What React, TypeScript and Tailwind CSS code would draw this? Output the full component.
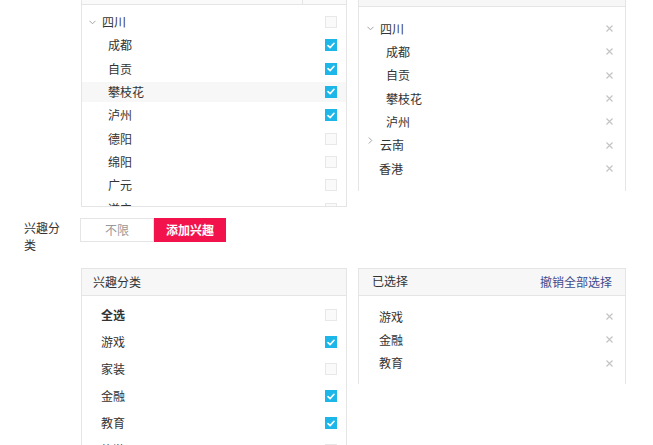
import React from 'react'

const font = { fontFamily: '"Noto Sans CJK SC", "Noto Sans", sans-serif' }

function Check({ on }: { on: boolean }) {
  if (on) {
    return (
      <span className="flex h-[12px] w-[12px] items-center justify-center bg-[#1db6e9]">
        <svg width="8" height="7" viewBox="0 0 8 7" fill="none">
          <path d="M1 3.6 L3.1 5.6 L7 1.3" stroke="#fff" strokeWidth="1.6" strokeLinecap="round" strokeLinejoin="round" />
        </svg>
      </span>
    )
  }
  return <span className="block h-[12px] w-[12px] border border-[#e8e8e8] bg-[#fafafa]" />
}

function Close() {
  return (
    <svg width="7" height="7" viewBox="0 0 7 7">
      <path d="M0.5 0.5 L6.5 6.5 M6.5 0.5 L0.5 6.5" stroke="#c4c4c4" strokeWidth="1.2" />
    </svg>
  )
}

function ChevronDown() {
  return (
    <svg width="7" height="5" viewBox="0 0 7 5" fill="none">
      <path d="M0.5 0.8 L3.5 3.8 L6.5 0.8" stroke="#999" strokeWidth="0.9" />
    </svg>
  )
}

function ChevronRight() {
  return (
    <svg width="5" height="7" viewBox="0 0 5 7" fill="none">
      <path d="M0.8 0.5 L3.8 3.5 L0.8 6.5" stroke="#999" strokeWidth="0.9" />
    </svg>
  )
}

const cities = [
  { name: '成都', on: true },
  { name: '自贡', on: true },
  { name: '攀枝花', on: true, hover: true },
  { name: '泸州', on: true },
  { name: '德阳', on: false },
  { name: '绵阳', on: false },
  { name: '广元', on: false },
  { name: '遂宁', on: false },
]

const interests = [
  { name: '游戏', on: true },
  { name: '家装', on: false },
  { name: '金融', on: true },
  { name: '教育', on: true },
  { name: '旅游', on: false },
]

export default function App() {
  return (
    <div className="h-[445px] w-[653px] overflow-hidden bg-white text-[12px] text-[#333]" style={font}>
      <div className="-mt-[23px]">
        {/* region selector */}
        <div className="flex items-start gap-[11px] pl-[81px]">
          <div className="w-[266px] border border-[#e5e5e5]">
            <div className="flex h-[27px] border-b border-[#e5e5e5] bg-[#fafafa]">
              <div className="flex-1" />
              <div className="w-[44px] border-l border-[#e5e5e5]" />
            </div>
            <div className="flex h-[201px] flex-col gap-[3.33px] overflow-hidden pt-[7px]">
              <div className="flex h-[20px] shrink-0 items-center pr-[9px] pl-[7px]">
                <span className="mr-[6px] flex w-[7px] justify-center"><ChevronDown /></span>
                <span className="flex-1">四川</span>
                <Check on={false} />
              </div>
              {cities.map((c) => (
                <div
                  key={c.name}
                  className={`flex h-[20px] shrink-0 items-center pr-[9px] pl-[26px] ${c.hover ? 'bg-[#f7f7f7]' : ''}`}
                >
                  <span className="flex-1">{c.name}</span>
                  <Check on={c.on} />
                </div>
              ))}
            </div>
          </div>

          <div className="mt-[2px] w-[268px] border-x border-t border-[#e5e5e5]">
            <div className="flex h-[27px] items-center justify-end border-b border-[#e5e5e5] bg-[#f7f7f7] pr-[13px] text-[#3f4a8c]">
              撤销全部选择
            </div>
            <div className="h-[184px] pt-[10px]">
              <div className="flex h-[23.33px] items-center pr-[12px] pl-[8px]">
                <span className="mr-[6px] flex w-[7px] justify-center"><ChevronDown /></span>
                <span className="flex-1">四川</span>
                <Close />
              </div>
              {['成都', '自贡', '攀枝花', '泸州'].map((n) => (
                <div key={n} className="flex h-[23.33px] items-center pr-[12px] pl-[27px]">
                  <span className="flex-1">{n}</span>
                  <Close />
                </div>
              ))}
              <div className="flex h-[23.33px] items-center pr-[12px] pl-[9px]">
                <span className="mr-[7px] flex w-[5px] self-start pt-[3px]"><ChevronRight /></span>
                <span className="flex-1">云南</span>
                <Close />
              </div>
              <div className="flex h-[23.33px] items-center pr-[12px] pl-[20px]">
                <span className="flex-1">香港</span>
                <Close />
              </div>
            </div>
          </div>
        </div>

        {/* interest tabs */}
        <div className="mt-[11px] flex items-start pl-[24px]">
          <div className="mt-[1px] w-[45px] leading-[17px]">兴趣分类</div>
          <div className="ml-[11px] flex">
            <button className="h-[24px] w-[74px] border border-[#e5e5e5] bg-white text-[#999]">不限</button>
            <button className="h-[24px] w-[72px] bg-[#f2134c] font-bold text-white">添加兴趣</button>
          </div>
        </div>

        {/* interest selector */}
        <div className="mt-[15px] flex items-start gap-[11px] pl-[81px]">
          <div className="w-[266px] border border-[#e5e5e5]">
            <div className="flex h-[27px] items-center border-b border-[#e5e5e5] bg-[#f7f7f7] pl-[11px]">兴趣分类</div>
            <div className="pt-[6px]">
              <div className="flex h-[26.9px] items-center pr-[9px] pl-[19px] font-bold">
                <span className="flex-1">全选</span>
                <Check on={false} />
              </div>
              {interests.map((i) => (
                <div key={i.name} className="flex h-[26.9px] items-center pr-[9px] pl-[19px]">
                  <span className="flex-1">{i.name}</span>
                  <Check on={i.on} />
                </div>
              ))}
            </div>
          </div>

          <div className="w-[268px] border-x border-t border-[#e5e5e5]">
            <div className="flex h-[27px] items-center justify-between border-b border-[#e5e5e5] bg-[#f7f7f7] px-[13px]">
              <span className="-mt-[2px]">已选择</span>
              <span className="text-[#3f4a8c]">撤销全部选择</span>
            </div>
            <div className="pt-[9px] pb-[9px]">
              {['游戏', '金融', '教育'].map((n) => (
                <div key={n} className="flex h-[23.33px] items-center pr-[12px] pl-[20px]">
                  <span className="flex-1">{n}</span>
                  <Close />
                </div>
              ))}
            </div>
          </div>
        </div>
      </div>
    </div>
  )
}
